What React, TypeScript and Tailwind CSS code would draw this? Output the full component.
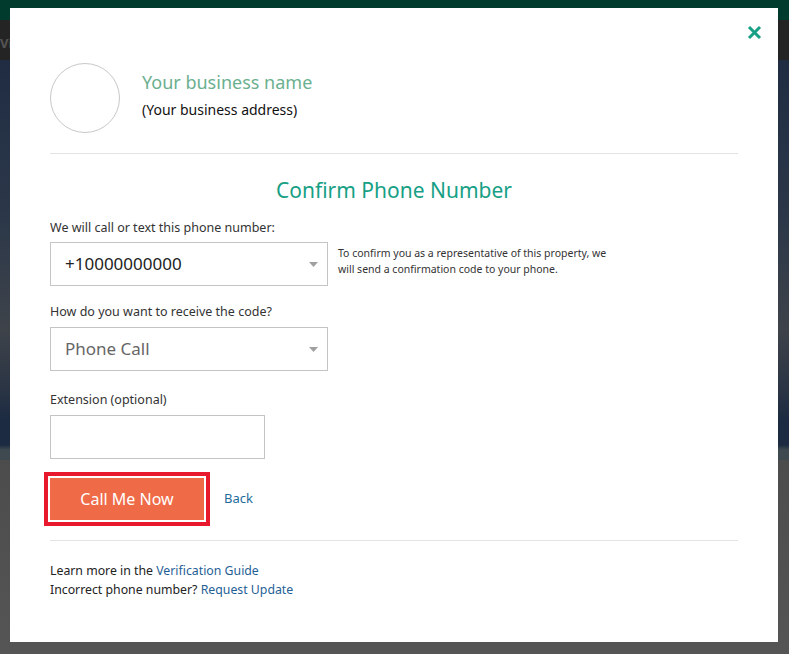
import React from "react";

export default function App() {
  const font = { fontFamily: '"Noto Sans", "Open Sans", sans-serif' };
  return (
    <div
      className="relative h-[654px] w-[789px] overflow-hidden bg-[linear-gradient(to_bottom,#003b2e_0px,#003b2e_20px,#242424_20px,#242424_60px,#202c42_60px,#2c3849_220px,#3e434a_330px,#2a3444_390px,#1c2b42_420px,#1c2b42_445px,#3f4a50_450px,#3f4a50_460px,#4c4c4c_460px,#555555_654px)] pl-[10px] pt-[8px]"
      style={font}
    >
      <span className="absolute left-0 top-[34px] text-[13px] font-bold text-[#555]">Vi</span>
      <div className="relative flex h-[634px] w-[768px] flex-col bg-white px-[40px]">
        <button className="absolute right-[16px] top-[17px] text-[#17a085]">
          <svg width="15" height="15" viewBox="0 0 15 15">
            <path d="M2 2 L13 13 M13 2 L2 13" stroke="#17a085" strokeWidth="3" strokeLinecap="butt" />
          </svg>
        </button>
        <div className="flex items-center gap-[22px] pt-[55px]">
          <div className="h-[70px] w-[70px] rounded-full border border-[#c8c8c8]" />
          <div className="-mt-[6px] flex flex-col">
            <span className="text-[18px] leading-[24px] text-[#6bb08f]">Your business name</span>
            <span className="mt-[6px] text-[14px] leading-[20px] text-[#111]">(Your business address)</span>
          </div>
        </div>
        <div className="mt-[20px] h-px w-full bg-[#e3e3e3]" />
        <h2 className="mt-[22px] text-center text-[21px] leading-[28px] text-[#17a085]">Confirm Phone Number</h2>
        <label className="mt-[15px] text-[12.5px] leading-[18px] text-[#333]">We will call or text this phone number:</label>
        <div className="mt-[5px] flex items-start gap-[10px]">
          <div className="flex h-[44px] w-[278px] items-center justify-between border border-[#c4c4c4] pl-[14px] pr-[9px]">
            <span className="text-[17px] text-[#222]">+10000000000</span>
            <svg width="9" height="5" viewBox="0 0 9 5"><path d="M0 0 H9 L4.5 5 Z" fill="#a0a0a0" /></svg>
          </div>
          <p className="mt-[3px] w-[280px] text-[10.5px] leading-[16px] text-[#333]">
            To confirm you as a representative of this property, we will send a confirmation code to your phone.
          </p>
        </div>
        <label className="mt-[17px] text-[12.5px] leading-[18px] text-[#333]">How do you want to receive the code?</label>
        <div className="mt-[6px] flex h-[44px] w-[278px] items-center justify-between border border-[#c4c4c4] pl-[14px] pr-[9px]">
          <span className="text-[17px] text-[#666]">Phone Call</span>
          <svg width="9" height="5" viewBox="0 0 9 5"><path d="M0 0 H9 L4.5 5 Z" fill="#a0a0a0" /></svg>
        </div>
        <label className="mt-[20px] text-[12.5px] leading-[18px] text-[#333]">Extension (optional)</label>
        <div className="mt-[6px] h-[44px] w-[215px] border border-[#c4c4c4]" />
        <div className="mt-[13px] flex items-center gap-[14px]">
          <div className="-ml-[6px] border-[4px] border-[#e8192c] p-[2px]">
            <button className="h-[42px] w-[154px] bg-[#ef6a47] text-[16px] text-white">Call Me Now</button>
          </div>
          <a className="text-[13px] text-[#1f6c9b]">Back</a>
        </div>
        <div className="mt-[14px] h-px w-full bg-[#e3e3e3]" />
        <p className="mt-[20px] text-[12.3px] leading-[19px] text-[#222]">
          Learn more in the <a className="text-[#1f5f96]">Verification Guide</a>
        </p>
        <p className="text-[12.3px] leading-[19px] text-[#222]">
          Incorrect phone number? <a className="text-[#1f5f96]">Request Update</a>
        </p>
      </div>
    </div>
  );
}
